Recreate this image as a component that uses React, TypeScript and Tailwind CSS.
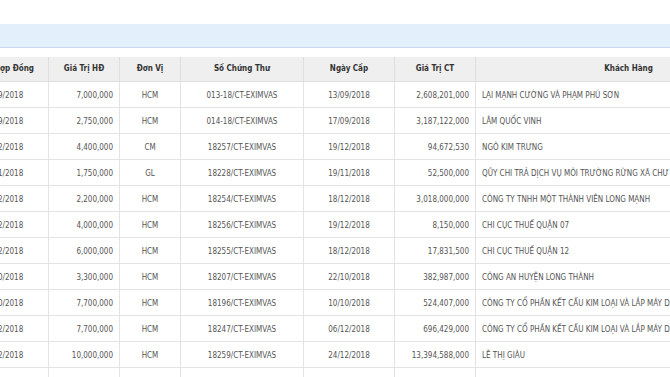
const columns = [
  { title: 'Ngày Hợp Đồng', width: 'w-[92px]', align: 'text-center' },
  { title: 'Giá Trị HĐ', width: 'w-[71px]', align: 'text-right pr-[6px]' },
  { title: 'Đơn Vị', width: 'w-[61px]', align: 'text-center' },
  { title: 'Số Chứng Thư', width: 'w-[123px]', align: 'text-center' },
  { title: 'Ngày Cấp', width: 'w-[91px]', align: 'text-center' },
  { title: 'Giá Trị CT', width: 'w-[81px]', align: 'text-right pr-[6px]' },
  { title: 'Khách Hàng', width: 'w-[306px]', align: 'text-left pl-[6px]' },
];

const rows = [
  ['13/09/2018', '7,000,000', 'HCM', '013-18/CT-EXIMVAS', '13/09/2018', '2,608,201,000', 'LẠI MẠNH CƯỜNG VÀ PHẠM PHÚ SƠN'],
  ['17/09/2018', '2,750,000', 'HCM', '014-18/CT-EXIMVAS', '17/09/2018', '3,187,122,000', 'LÂM QUỐC VINH'],
  ['19/12/2018', '4,400,000', 'CM', '18257/CT-EXIMVAS', '19/12/2018', '94,672,530', 'NGÔ KIM TRƯNG'],
  ['19/11/2018', '1,750,000', 'GL', '18228/CT-EXIMVAS', '19/11/2018', '52,500,000', 'QŨY CHI TRẢ DỊCH VỤ MÔI TRƯỜNG RỪNG XÃ CHƯ PRÔNG'],
  ['18/12/2018', '2,200,000', 'HCM', '18254/CT-EXIMVAS', '18/12/2018', '3,018,000,000', 'CÔNG TY TNHH MỘT THÀNH VIÊN LONG MẠNH'],
  ['19/12/2018', '4,000,000', 'HCM', '18256/CT-EXIMVAS', '19/12/2018', '8,150,000', 'CHI CỤC THUẾ QUẬN 07'],
  ['18/12/2018', '6,000,000', 'HCM', '18255/CT-EXIMVAS', '18/12/2018', '17,831,500', 'CHI CỤC THUẾ QUẬN 12'],
  ['22/10/2018', '3,300,000', 'HCM', '18207/CT-EXIMVAS', '22/10/2018', '382,987,000', 'CÔNG AN HUYỆN LONG THÀNH'],
  ['10/10/2018', '7,700,000', 'HCM', '18196/CT-EXIMVAS', '10/10/2018', '524,407,000', 'CÔNG TY CỔ PHẦN KẾT CẤU KIM LOẠI VÀ LẮP MÁY DẦU KHÍ'],
  ['06/12/2018', '7,700,000', 'HCM', '18247/CT-EXIMVAS', '06/12/2018', '696,429,000', 'CÔNG TY CỔ PHẦN KẾT CẤU KIM LOẠI VÀ LẮP MÁY DẦU KHÍ'],
  ['24/12/2018', '10,000,000', 'HCM', '18259/CT-EXIMVAS', '24/12/2018', '13,394,588,000', 'LÊ THỊ GIÀU'],
  ['', '', '', '', '', '', ''],
];

export default function App() {
  return (
    <div className="w-[670px] h-[377px] overflow-hidden bg-white font-['Tahoma','DejaVu_Sans_Condensed','DejaVu_Sans',sans-serif] text-[8px]">
      <div className="h-6" />
      <div className="h-6 bg-[#e3f0fb] border-b border-[#cbd8f2]" />
      <div className="h-[9px]" />
      {/* grid is scrolled sideways, first column partly hidden */}
      <div className="overflow-hidden">
        <table className="-ml-[44px] table-fixed border-collapse w-[825px]">
          <thead>
            <tr className="h-6 bg-[#efefef]">
              {columns.map((c) => (
                <th
                  key={c.title}
                  className={`${c.width} text-center font-bold text-[#333] border-x border-b border-[#dedede] whitespace-nowrap`}
                >
                  {c.title}
                </th>
              ))}
            </tr>
          </thead>
          <tbody>
            {rows.map((r, i) => (
              <tr key={i} className="h-[26px]">
                {r.map((cell, j) => (
                  <td
                    key={j}
                    className={`${columns[j].align} pt-[3px] text-[#555] border border-[#e3e3e3] whitespace-nowrap overflow-hidden`}
                  >
                    {cell}
                  </td>
                ))}
              </tr>
            ))}
          </tbody>
        </table>
      </div>
    </div>
  );
}
